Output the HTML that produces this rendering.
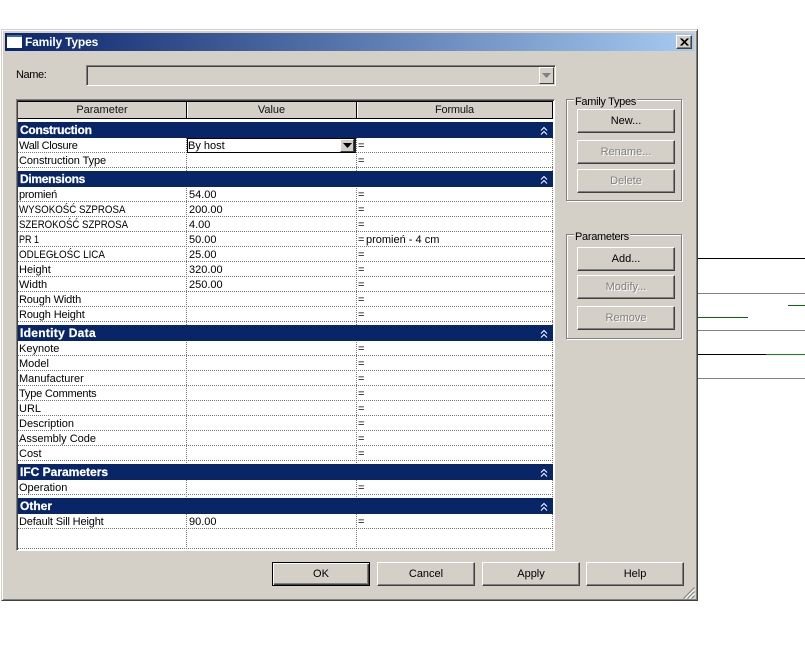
<!DOCTYPE html>
<html><head><meta charset="utf-8"><style>
html,body{margin:0;padding:0;width:805px;height:667px;overflow:hidden;background:#fff}
body{position:relative;font:11px/15px "Liberation Sans","DejaVu Sans",sans-serif;color:#000}
div{position:absolute;box-sizing:border-box}
.l{height:1px}
.t{white-space:nowrap;height:15px;line-height:15px;margin-top:1px}
.s{transform-origin:0 50%}
.band{left:18px;width:535px;height:16px;background:#082567}
.band b{position:absolute;left:2px;top:0;line-height:16px;color:#fff;font-size:12px;font-family:"Liberation Sans",sans-serif;white-space:nowrap;-webkit-text-stroke:.25px #fff}
.band svg{position:absolute;left:522px;top:4px}
.d{left:18px;width:535px;height:0;border-top:1px dotted #777}
.v{top:138px;height:411px;width:0;border-left:1px dotted #777}
.btn{width:98px;height:24px;background:#d4d0c8;border-top:1px solid #fff;border-left:1px solid #fff;border-right:1px solid #404040;border-bottom:1px solid #404040;box-shadow:inset -1px -1px 0 #808080;text-align:center;line-height:23px;font-size:11px}
.dis{color:#808080;text-shadow:1px 1px 0 #fff}
.g{border:1px solid #808080;box-shadow:1px 1px 0 #fff,inset 1px 1px 0 #fff}
.gl{background:#d4d0c8;padding:0 1px;height:13px;line-height:13px;font-size:11px;letter-spacing:-.3px;white-space:nowrap}
.h{top:102px;height:16px;text-align:center;line-height:16px;color:#111;font-size:11px}
</style></head><body>
<div class="l" style="left:698px;width:107px;top:258px;background:#000"></div>
<div class="l" style="left:698px;width:107px;top:293px;background:#808080"></div>
<div class="l" style="left:788px;width:17px;top:305px;background:#0a6a0a"></div>
<div class="l" style="left:698px;width:50px;top:317px;background:#0a6a0a"></div>
<div class="l" style="left:698px;width:107px;top:330px;background:#808080"></div>
<div class="l" style="left:698px;width:68px;top:354px;background:#000"></div>
<div class="l" style="left:766px;width:39px;top:354px;background:#0a8a0a"></div>
<div class="l" style="left:698px;width:107px;top:378px;background:#808080"></div>

<div style="left:1px;top:29px;width:697px;height:572px;background:#d4d0c8;border-top:1px solid #d4d0c8;border-left:1px solid #d4d0c8;border-right:1px solid #404040;border-bottom:1px solid #404040;box-shadow:inset 1px 1px 0 #fff,inset -1px -1px 0 #808080"></div>
<div style="left:5px;top:33px;width:689px;height:18px;background:linear-gradient(90deg,#0a246a,#a6caf0)"></div>
<div style="left:7px;top:35px;width:15px;height:13px;background:#fff;border-top:2px solid #3a6ea5"></div>
<div class="t" style="left:25px;top:33px;color:#fff;font:bold 12px/17px 'Liberation Sans',sans-serif;letter-spacing:-.17px">Family Types</div>
<div style="left:676px;top:35px;width:16px;height:14px;background:#d4d0c8;border-top:1px solid #fff;border-left:1px solid #fff;border-right:1px solid #404040;border-bottom:1px solid #404040;box-shadow:inset -1px -1px 0 #808080">
<svg width="14" height="12" style="position:absolute;left:0;top:0"><path d="M3.500 2.500l7 7M4.500 2.500l7 7M10.500 2.500l-7 7M11.500 2.500l-7 7" stroke="#000" fill="none"/></svg></div>

<div class="t" style="left:16px;top:67px;letter-spacing:-.4px">Name:</div>
<div style="left:86px;top:65px;width:470px;height:21px;background:#d4d0c8;border-top:1px solid #808080;border-left:1px solid #808080;border-right:1px solid #fff;border-bottom:1px solid #fff;box-shadow:inset 1px 1px 0 #404040,inset -1px -1px 0 #d4d0c8"></div>
<div style="left:539px;top:67px;width:15px;height:17px;background:#d4d0c8;border-top:1px solid #fff;border-left:1px solid #fff;border-right:1px solid #404040;border-bottom:1px solid #404040"></div>
<svg width="9" height="5" style="position:absolute;left:542px;top:73px"><path d="M0 0h9L4.500 5z" fill="#808080"/></svg>

<div style="left:16px;top:99px;width:539px;height:452px;background:#fff;border-top:1px solid #808080;border-left:1px solid #808080;border-right:1px solid #fff;border-bottom:1px solid #fff;box-shadow:inset 1px 1px 0 #404040"></div>
<div style="left:18px;top:101px;width:535px;height:18px;background:#d4d0c8;border-top:1px solid #000;border-bottom:1px solid #000;border-right:1px solid #000"></div>
<div style="left:186px;top:101px;width:1px;height:18px;background:#000"></div>
<div style="left:187px;top:102px;width:1px;height:16px;background:#fff"></div>
<div style="left:356px;top:101px;width:1px;height:18px;background:#000"></div>
<div style="left:357px;top:102px;width:1px;height:16px;background:#fff"></div>
<div class="h" style="left:18px;width:168px">Parameter</div>
<div class="h" style="left:187px;width:169px">Value</div>
<div class="h" style="left:357px;width:195px;letter-spacing:-.2px">Formula</div>

<div class="v" style="left:186px"></div>
<div class="v" style="left:356px"></div>
<div class="v" style="left:552px"></div>

<div class="d" style="top:152px"></div><div class="d" style="top:167px"></div>
<div class="d" style="top:201px"></div><div class="d" style="top:216px"></div><div class="d" style="top:231px"></div><div class="d" style="top:246px"></div><div class="d" style="top:261px"></div><div class="d" style="top:276px"></div><div class="d" style="top:291px"></div><div class="d" style="top:306px"></div><div class="d" style="top:321px"></div>
<div class="d" style="top:355px"></div><div class="d" style="top:370px"></div><div class="d" style="top:385px"></div><div class="d" style="top:400px"></div><div class="d" style="top:415px"></div><div class="d" style="top:430px"></div><div class="d" style="top:445px"></div><div class="d" style="top:460px"></div>
<div class="d" style="top:494px"></div><div class="d" style="top:528px"></div><div class="d" style="top:548px"></div>

<div class="band" style="top:122px"><b style="letter-spacing:-.25px">Construction</b><svg width="8" height="9"><path d="M1 4.500L4 1.500L7 4.500M1 8.500L4 5.500L7 8.500" stroke="#fff" fill="none"/></svg></div>
<div class="band" style="top:171px"><b style="letter-spacing:-.3px">Dimensions</b><svg width="8" height="9"><path d="M1 4.500L4 1.500L7 4.500M1 8.500L4 5.500L7 8.500" stroke="#fff" fill="none"/></svg></div>
<div class="band" style="top:325px"><b style="letter-spacing:.3px">Identity Data</b><svg width="8" height="9"><path d="M1 4.500L4 1.500L7 4.500M1 8.500L4 5.500L7 8.500" stroke="#fff" fill="none"/></svg></div>
<div class="band" style="top:464px"><b>IFC Parameters</b><svg width="8" height="9"><path d="M1 4.500L4 1.500L7 4.500M1 8.500L4 5.500L7 8.500" stroke="#fff" fill="none"/></svg></div>
<div class="band" style="top:498px"><b>Other</b><svg width="8" height="9"><path d="M1 4.500L4 1.500L7 4.500M1 8.500L4 5.500L7 8.500" stroke="#fff" fill="none"/></svg></div>

<div class="t" style="left:19px;top:138px;letter-spacing:-.28px">Wall Closure</div>
<div class="t" style="left:19px;top:153px;letter-spacing:-.08px">Construction Type</div>
<div class="t" style="left:19px;top:187px;letter-spacing:-.25px">promień</div>
<div class="t s" style="left:19px;top:202px;transform:scaleX(.884)">WYSOKOŚĆ SZPROSA</div>
<div class="t s" style="left:19px;top:217px;transform:scaleX(.874)">SZEROKOŚĆ SZPROSA</div>
<div class="t s" style="left:19px;top:232px;transform:scaleX(.82)">PR 1</div>
<div class="t s" style="left:19px;top:247px;transform:scaleX(.896)">ODLEGŁOŚC LICA</div>
<div class="t" style="left:19px;top:262px">Height</div>
<div class="t" style="left:19px;top:277px">Width</div>
<div class="t" style="left:19px;top:292px;letter-spacing:-.14px">Rough Width</div>
<div class="t" style="left:19px;top:307px;letter-spacing:-.13px">Rough Height</div>
<div class="t" style="left:19px;top:341px">Keynote</div>
<div class="t" style="left:19px;top:356px">Model</div>
<div class="t" style="left:19px;top:371px">Manufacturer</div>
<div class="t" style="left:19px;top:386px;letter-spacing:-.2px">Type Comments</div>
<div class="t" style="left:19px;top:401px">URL</div>
<div class="t" style="left:19px;top:416px">Description</div>
<div class="t" style="left:19px;top:431px">Assembly Code</div>
<div class="t" style="left:19px;top:446px">Cost</div>
<div class="t" style="left:19px;top:480px">Operation</div>
<div class="t" style="left:19px;top:514px;letter-spacing:-.15px">Default Sill Height</div>

<div class="t" style="left:189px;top:187px">54.00</div>
<div class="t" style="left:189px;top:202px">200.00</div>
<div class="t" style="left:189px;top:217px">4.00</div>
<div class="t" style="left:189px;top:232px">50.00</div>
<div class="t" style="left:189px;top:247px">25.00</div>
<div class="t" style="left:189px;top:262px">320.00</div>
<div class="t" style="left:189px;top:277px">250.00</div>
<div class="t" style="left:189px;top:514px">90.00</div>

<div class="t" style="left:358px;top:138px">=</div><div class="t" style="left:358px;top:153px">=</div>
<div class="t" style="left:358px;top:187px">=</div><div class="t" style="left:358px;top:202px">=</div><div class="t" style="left:358px;top:217px">=</div><div class="t" style="left:358px;top:232px">=</div><div class="t" style="left:358px;top:247px">=</div><div class="t" style="left:358px;top:262px">=</div><div class="t" style="left:358px;top:277px">=</div><div class="t" style="left:358px;top:292px">=</div><div class="t" style="left:358px;top:307px">=</div>
<div class="t" style="left:358px;top:341px">=</div><div class="t" style="left:358px;top:356px">=</div><div class="t" style="left:358px;top:371px">=</div><div class="t" style="left:358px;top:386px">=</div><div class="t" style="left:358px;top:401px">=</div><div class="t" style="left:358px;top:416px">=</div><div class="t" style="left:358px;top:431px">=</div><div class="t" style="left:358px;top:446px">=</div>
<div class="t" style="left:358px;top:480px">=</div><div class="t" style="left:358px;top:514px">=</div>
<div class="t" style="left:366px;top:232px">promień - 4 cm</div>

<div style="left:187px;top:138px;width:169px;height:15px;background:#fff;border:1px solid #000;border-right:2px solid #222"></div>
<div class="t" style="left:188px;top:138px">By host</div>
<div style="left:340px;top:139px;width:14px;height:13px;background:#d4d0c8;border-top:1px solid #fff;border-left:1px solid #fff;border-right:1px solid #404040;border-bottom:1px solid #404040"></div>
<svg width="9" height="5" style="position:absolute;left:343px;top:143px"><path d="M0 0h9L4.500 5z" fill="#000"/></svg>

<div class="g" style="left:566px;top:99px;width:116px;height:102px"></div>
<div class="gl" style="left:574px;top:96px">Family Types</div>
<div class="btn" style="left:577px;top:109px">New...</div>
<div class="btn dis" style="left:577px;top:140px">Rename...</div>
<div class="btn dis" style="left:577px;top:169px">Delete</div>

<div class="g" style="left:566px;top:234px;width:116px;height:105px"></div>
<div class="gl" style="left:574px;top:231px">Parameters</div>
<div class="btn" style="left:577px;top:247px">Add...</div>
<div class="btn dis" style="left:577px;top:275px">Modify...</div>
<div class="btn dis" style="left:577px;top:306px">Remove</div>

<div class="btn" style="left:272px;top:562px;border:1px solid #000;box-shadow:inset 1px 1px 0 #fff,inset -1px -1px 0 #404040,inset -2px -2px 0 #808080">OK</div>
<div class="btn" style="left:377px;top:562px">Cancel</div>
<div class="btn" style="left:482px;top:562px">Apply</div>
<div class="btn" style="left:586px;top:562px">Help</div>

<svg width="12" height="12" style="position:absolute;left:683px;top:587px"><path d="M0.500 11.500L11.500 0.500M4.500 11.500L11.500 4.500M8.500 11.500L11.500 8.500" stroke="#808080" fill="none"/><path d="M2.500 11.500L11.500 2.500M6.500 11.500L11.500 6.500" stroke="#fff" fill="none"/></svg>
</body></html>
